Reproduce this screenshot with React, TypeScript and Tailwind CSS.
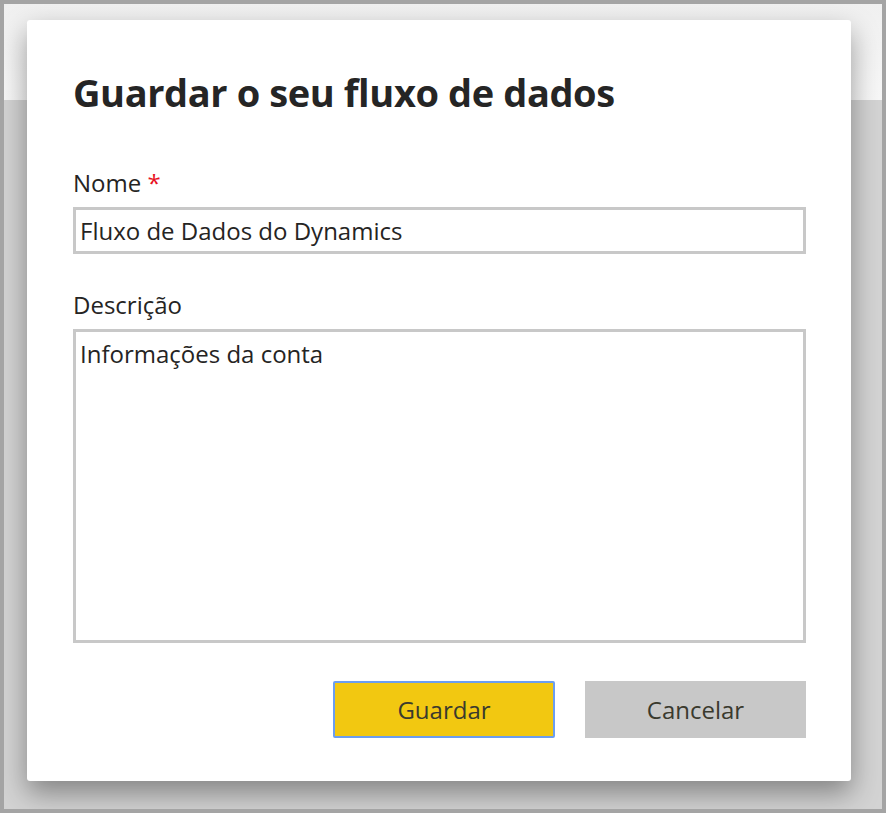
export default function App() {
  return (
    <div
      className="relative w-[886px] h-[813px] border-4 border-[#a4a4a4] overflow-hidden"
      style={{ fontFamily: '"Open Sans", "Noto Sans", sans-serif' }}
    >
      {/* page behind the dialog */}
      <div className="flex flex-col h-full">
        <div className="h-[96px] bg-gradient-to-b from-[#f0f0f0] to-[#f7f7f7]" />
        <div className="flex-1 bg-[#d3d3d3]" />
      </div>

      {/* dialog */}
      <div className="absolute left-[23px] top-[16px] w-[824px] h-[761px] bg-white rounded-[3px] shadow-[0_12px_28px_rgba(0,0,0,0.38)] pl-[46px] pr-[45px] pt-[48px] flex flex-col">
        <h1 className="text-[38px] leading-[48px] font-bold text-[#252525] tracking-[-0.4px]">
          Guardar o seu fluxo de dados
        </h1>

        <label className="mt-[51px] text-[24px] leading-[32px] text-[#252423]">
          Nome <span className="text-[#e81123]">*</span>
        </label>
        <div className="mt-[8px] h-[47px] border-[3px] border-[#c8c8c8] flex items-center px-[4px]">
          <span className="text-[24px] text-[#252423]">Fluxo de Dados do Dynamics</span>
        </div>

        <label className="mt-[35px] text-[24px] leading-[32px] text-[#252423]">Descrição</label>
        <div className="mt-[8px] h-[314px] border-[3px] border-[#c8c8c8] px-[4px] pt-[6px]">
          <span className="text-[24px] leading-[32px] text-[#252423]">Informações da conta</span>
        </div>

        <div className="mt-[38px] flex justify-end gap-[30px]">
          <button className="w-[222px] h-[57px] bg-[#f2c811] border-2 border-[#6c9ef0] rounded-[2px] text-[24px] text-[#3a3a2e]">
            Guardar
          </button>
          <button className="w-[221px] h-[57px] bg-[#c8c8c8] text-[24px] text-[#3a3a2e]">
            Cancelar
          </button>
        </div>
      </div>
    </div>
  );
}
